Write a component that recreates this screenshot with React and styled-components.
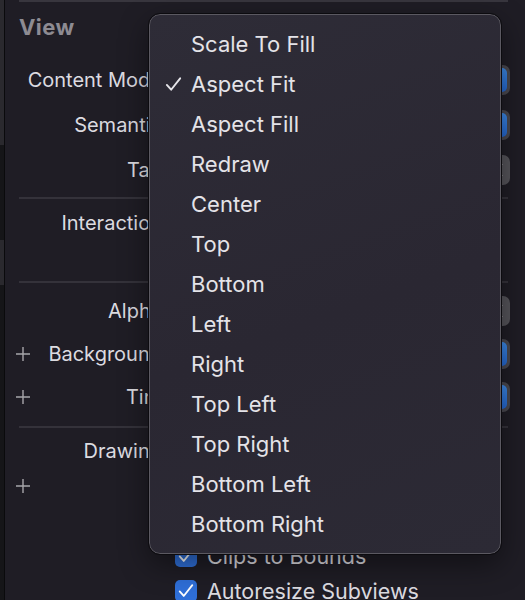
import React from 'react';
import styled, { createGlobalStyle } from 'styled-components';

const GlobalStyle = createGlobalStyle`
  html, body {
    margin: 0;
    padding: 0;
    background: #1f1d25;
  }
  * {
    box-sizing: border-box;
  }
`;

const menuItems = [
  'Scale To Fill',
  'Aspect Fit',
  'Aspect Fill',
  'Redraw',
  'Center',
  'Top',
  'Bottom',
  'Left',
  'Right',
  'Top Left',
  'Top Right',
  'Bottom Left',
  'Bottom Right',
];

const Plus = () => (
  <svg width="16" height="16" viewBox="0 0 16 16">
    <path d="M8 1v14M1 8h14" stroke="#a7a6ab" strokeWidth="1.4" />
  </svg>
);

const Check = ({ color = '#fff', size = 20 }) => (
  <svg width={size} height={size} viewBox="0 0 20 20">
    <path d="M3 10.5l4.5 5L17 3.5" fill="none" stroke={color} strokeWidth="2" strokeLinecap="round" strokeLinejoin="round" />
  </svg>
);

const Popup = () => (
  <PopupFrame>
    <PopupArrows />
  </PopupFrame>
);

const Stepper = () => (
  <StepperFrame>
    <svg width="12" height="30" viewBox="0 0 12 30">
      <path d="M3 10l3-3 3 3M3 20l3 3 3-3" fill="none" stroke="#d8d8dc" strokeWidth="1.6" />
    </svg>
  </StepperFrame>
);

const Field = ({ label, plus, children }) => (
  <Row>
    <LabelCell>
      {plus && <PlusSlot><Plus /></PlusSlot>}
      <Label>{label}</Label>
    </LabelCell>
    <Control>{children}</Control>
  </Row>
);

const CheckRow = ({ label, text, plus, on = true }) => (
  <Field label={label} plus={plus}>
    <Box $on={on}>{on && <Check size={18} />}</Box>
    <BoxText>{text}</BoxText>
  </Field>
);

export default function App() {
  return (
    <Page>
      <GlobalStyle />
      <Gutter />
      <Inspector>
        <TopRule />
        <Heading>View</Heading>

        <Section $top={25} $gap={15}>
          <Field label="Content Mode"><Popup /></Field>
          <Field label="Semantic"><Popup /></Field>
          <Field label="Tag"><Stepper /></Field>
        </Section>
        <Divider $top={12} />

        <Section $top={9} $gap={4}>
          <CheckRow label="Interaction" text="User Interaction Enabled" />
          <CheckRow label="" text="Multiple Touch" on={false} />
        </Section>
        <Divider $top={9} />

        <Section $top={13} $gap={13}>
          <Field label="Alpha"><Stepper /></Field>
          <Field label="Background" plus><Popup /></Field>
          <Field label="Tint" plus><Popup /></Field>
        </Section>
        <Divider $top={14} />

        <Section $top={8} $gap={5}>
          <CheckRow label="Drawing" text="Opaque" />
          <CheckRow label="" text="Hidden" plus on={false} />
          <CheckRow label="" text="Clears Graphics Context" />
          <CheckRow label="" text="Clips to Bounds" />
          <CheckRow label="" text="Autoresize Subviews" />
        </Section>
      </Inspector>

      <Menu>
        {menuItems.map((item) => (
          <MenuItem key={item}>
            <Tick>{item === 'Aspect Fit' && <Check color="#e6e5ea" size={19} />}</Tick>
            {item}
          </MenuItem>
        ))}
      </Menu>
    </Page>
  );
}

const Page = styled.div`
  position: relative;
  width: 525px;
  height: 600px;
  overflow: hidden;
  display: flex;
  background: #1f1d25;
  font-family: Inter, "Noto Sans", sans-serif;
`;

const Gutter = styled.div`
  width: 5px;
  flex: none;
  background: linear-gradient(#2a292e 0 145px, #151518 145px 240px, #2a292e 240px 285px, #151518 285px);
  border-right: 1px solid #0a0a0c;
`;

const Inspector = styled.div`
  flex: 1;
  padding: 0 17px 0 14px;
`;

const TopRule = styled.div`
  height: 2px;
  background: #38363e;
`;

const Heading = styled.div`
  margin-top: 12px;
  height: 26px;
  line-height: 26px;
  font-size: 22px;
  font-weight: 700;
  letter-spacing: 0.4px;
  color: #8d8b92;
`;

const Section = styled.div`
  margin-top: ${(p) => p.$top}px;
  display: flex;
  flex-direction: column;
  gap: ${(p) => p.$gap}px;
`;

const Divider = styled.div`
  margin-top: ${(p) => p.$top}px;
  height: 2px;
  background: #34323a;
`;

const Row = styled.div`
  display: grid;
  grid-template-columns: 143px 1fr;
  column-gap: 8px;
  align-items: center;
  height: 30px;
`;

const LabelCell = styled.div`
  position: relative;
  display: flex;
  justify-content: flex-end;
`;

const PlusSlot = styled.span`
  position: absolute;
  left: -4px;
  top: 50%;
  transform: translateY(-50%);
  display: flex;
`;

const Label = styled.span`
  font-size: 20px;
  color: #dcdbe0;
  white-space: nowrap;
`;

const Control = styled.div`
  display: flex;
  align-items: center;
  gap: 10px;
  height: 30px;
`;

const PopupFrame = styled.div`
  flex: 1;
  height: 30px;
  margin-right: -2px;
  border-radius: 7px;
  background: #4a4950;
  display: flex;
  justify-content: flex-end;
  padding: 3px;
`;

const PopupArrows = styled.div`
  width: 22px;
  height: 24px;
  border-radius: 5px;
  background: linear-gradient(#3d8ae6, #2466cf);
`;

const StepperFrame = styled.div`
  margin-left: auto;
  margin-right: -2px;
  width: 22px;
  height: 30px;
  border-radius: 7px;
  background: #55545a;
  display: flex;
  justify-content: center;
`;

const Box = styled.div`
  width: 22px;
  height: 22px;
  margin-left: 5px;
  border-radius: 5px;
  background: ${(p) => (p.$on ? '#2f6fd8' : '#45444b')};
  display: flex;
  align-items: center;
  justify-content: center;
`;

const BoxText = styled.span`
  font-size: 21.5px;
  color: #dcdbe0;
  white-space: nowrap;
`;

const Menu = styled.div`
  position: absolute;
  left: 149px;
  top: 14px;
  width: 352px;
  height: 540px;
  padding: 9px 0;
  border-radius: 11px;
  border: 1px solid #5b5961;
  outline: 1px solid #0c0b0f;
  background: linear-gradient(160deg, #2e2c37 0%, #2a2732 55%, #2c2a35 100%);
  box-shadow: 0 10px 30px rgba(0, 0, 0, 0.45);
`;

const MenuItem = styled.div`
  display: flex;
  align-items: center;
  height: 40px;
  font-size: 22px;
  color: #e4e3e8;
  white-space: nowrap;
`;

const Tick = styled.span`
  width: 41px;
  padding-left: 14px;
  display: flex;
  align-items: center;
`;
